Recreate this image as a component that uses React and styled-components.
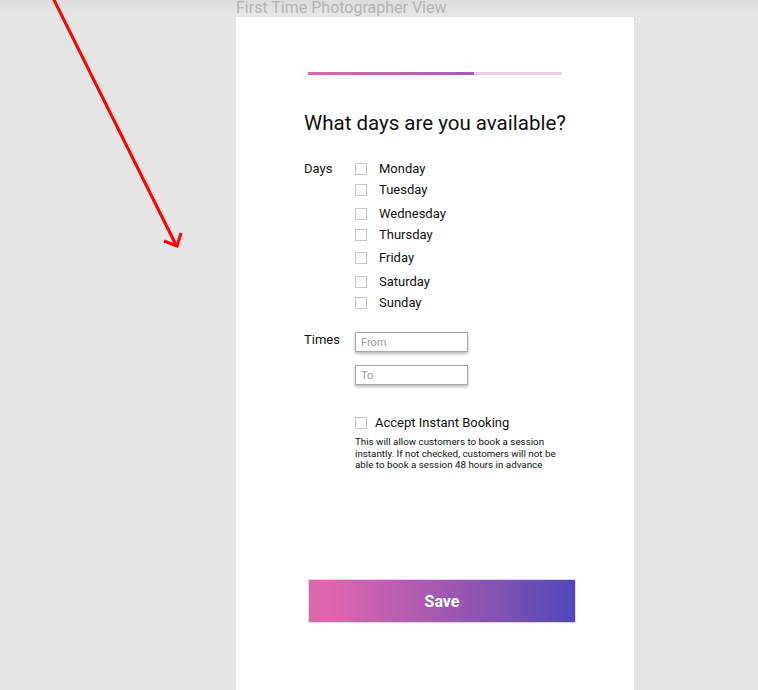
import React from 'react'
import styled, { createGlobalStyle } from 'styled-components'

const days = [
  { name: 'Monday', space: 0 },
  { name: 'Tuesday', space: 0 },
  { name: 'Wednesday', space: 3 },
  { name: 'Thursday', space: 0 },
  { name: 'Friday', space: 2 },
  { name: 'Saturday', space: 3 },
  { name: 'Sunday', space: 0 },
]

const App = () => {
  return (
    <>
      <GlobalStyle />
      <Screen>
        <Arrow width="200" height="260" viewBox="0 0 200 260">
          <path d="M53 -2 L176 245" stroke="#ff0000" strokeWidth="3" fill="none" />
          <path d="M164 241 L177 246 L181 233" stroke="#ff0000" strokeWidth="3" fill="none" strokeLinejoin="miter" />
        </Arrow>

        <Frame>
          <FrameTitle>First Time Photographer View</FrameTitle>
          <Card>
            <Progress>
              <ProgressFill />
            </Progress>

            <Heading>What days are you available?</Heading>

            <FieldRow>
              <FieldLabel>Days</FieldLabel>
              <DayList>
                {days.map((d) => (
                  <DayRow key={d.name} $space={d.space}>
                    <Box />
                    <DayName>{d.name}</DayName>
                  </DayRow>
                ))}
              </DayList>
            </FieldRow>

            <TimesRow>
              <FieldLabel $top={2}>Times</FieldLabel>
              <Inputs>
                <TimeInput placeholder="From" />
                <TimeInput placeholder="To" />
              </Inputs>
            </TimesRow>

            <Booking>
              <BookingRow>
                <Box />
                <BookingLabel>Accept Instant Booking</BookingLabel>
              </BookingRow>
              <Hint>
                This will allow customers to book a session instantly. If not checked, customers will not be
                able to book a session 48 hours in advance
              </Hint>
            </Booking>

            <SaveButton>Save</SaveButton>
          </Card>
        </Frame>
      </Screen>
    </>
  )
}

const GlobalStyle = createGlobalStyle`
  html, body {
    margin: 0;
    padding: 0;
    background: #e5e5e5;
    font-family: Roboto, "Liberation Sans", sans-serif;
  }
`

const Screen = styled.div`
  position: relative;
  width: 758px;
  height: 690px;
  overflow: hidden;
  background: linear-gradient(180deg, #dcdcdc 0px, #e5e5e5 14px, #e5e5e5 100%);
`

const Arrow = styled.svg`
  position: absolute;
  left: 0;
  top: 0;
`

const Frame = styled.div`
  display: flex;
  flex-direction: column;
  width: 398px;
  margin-left: 236px;
`

const FrameTitle = styled.div`
  height: 17px;
  font-size: 16px;
  line-height: 15px;
  color: #b4b4b4;
  white-space: nowrap;
`

const Card = styled.div`
  display: flex;
  flex-direction: column;
  height: 673px;
  background: #ffffff;
  padding: 55px 0 0 68px;
  box-sizing: border-box;
`

const Progress = styled.div`
  width: 254px;
  height: 3px;
  margin-left: 4px;
  background: #e8cde6;
`

const ProgressFill = styled.div`
  width: 166px;
  height: 100%;
  background: linear-gradient(90deg, #e066ae, #a95cb8);
`

const Heading = styled.h1`
  margin: 36px 0 0;
  font-size: 20.5px;
  line-height: 24px;
  font-weight: 400;
  color: #111;
`

const FieldRow = styled.div`
  display: flex;
  margin-top: 26px;
`

const TimesRow = styled(FieldRow)`
  margin-top: 14px;
`

const FieldLabel = styled.div`
  width: 51px;
  font-size: 13px;
  line-height: 16px;
  color: #111;
  padding-top: ${({ $top }) => $top || 0}px;
`

const DayList = styled.div`
  display: flex;
  flex-direction: column;
`

const DayRow = styled.div`
  display: flex;
  align-items: center;
  gap: 12px;
  height: 16px;
  margin-bottom: 5px;
  margin-top: ${({ $space }) => $space}px;
`

const Box = styled.span`
  width: 12px;
  height: 12px;
  box-sizing: border-box;
  border: 1px solid #c4c4c4;
  flex-shrink: 0;
`

const DayName = styled.span`
  font-size: 13px;
  line-height: 16px;
  color: #111;
`

const Inputs = styled.div`
  display: flex;
  flex-direction: column;
  gap: 13px;
  padding-top: 2px;
`

const TimeInput = styled.input`
  width: 113px;
  height: 20px;
  box-sizing: border-box;
  border: 1px solid #a8a8a8;
  box-shadow: 0 2px 3px rgba(0, 0, 0, 0.28);
  padding: 0 5px;
  font-family: Roboto, "Liberation Sans", sans-serif;
  font-size: 11px;
  outline: none;
  &::placeholder {
    color: #9a9a9a;
  }
`

const Booking = styled.div`
  display: flex;
  flex-direction: column;
  margin: 29px 0 0 51px;
  width: 212px;
`

const BookingRow = styled.div`
  display: flex;
  align-items: center;
  gap: 8px;
`

const BookingLabel = styled.span`
  font-size: 13px;
  line-height: 18px;
  color: #111;
`

const Hint = styled.p`
  margin: 4px 0 0;
  font-size: 9.8px;
  line-height: 11.5px;
  color: #111;
`

const SaveButton = styled.button`
  align-self: flex-start;
  margin: auto 0 67px 4px;
  width: 268px;
  height: 44px;
  border: 1px solid #e4d6ee;
  background: linear-gradient(90deg, #d96aac 0%, #e266ad 6%, #a85bb1 45%, #8352b3 70%, #4f47b7 100%);
  color: #ffffff;
  font-family: Roboto, "Liberation Sans", sans-serif;
  font-size: 16px;
  font-weight: 700;
  cursor: pointer;
`

export default App
